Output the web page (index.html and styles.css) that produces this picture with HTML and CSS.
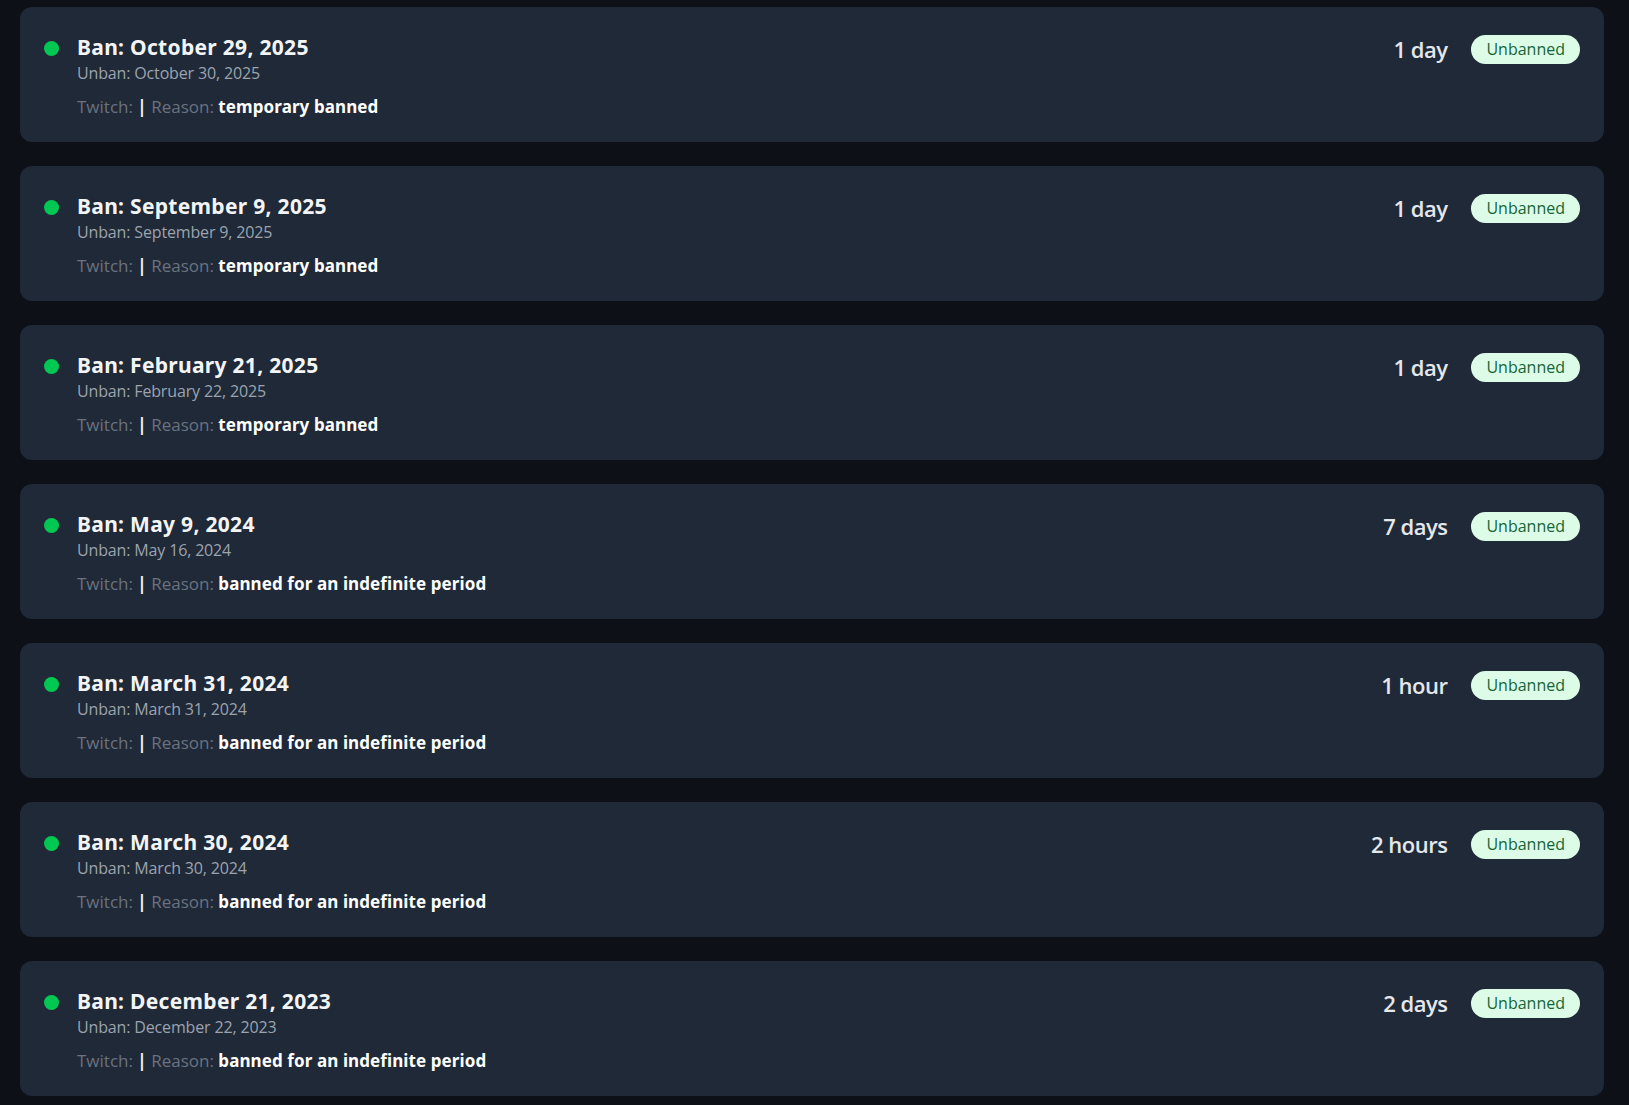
FILE: index.html
```html
<!DOCTYPE html>
<html lang="en">
<head>
<meta charset="utf-8">
<title>Ban history</title>
<link rel="stylesheet" href="styles.css">
</head>
<body>
<main class="list">
  <article class="card">
    <div class="info">
      <span class="dot"></span>
      <div class="text">
        <div class="title">Ban: October 29, 2025</div>
        <div class="unban">Unban: October 30, 2025</div>
        <div class="meta"><span class="label">Twitch:</span> <span class="sep">|</span> <span class="label">Reason:</span> <span class="reason">temporary banned</span></div>
      </div>
    </div>
    <div class="side"><span class="duration">1 day</span><span class="badge">Unbanned</span></div>
  </article>
  <article class="card">
    <div class="info">
      <span class="dot"></span>
      <div class="text">
        <div class="title">Ban: September 9, 2025</div>
        <div class="unban">Unban: September 9, 2025</div>
        <div class="meta"><span class="label">Twitch:</span> <span class="sep">|</span> <span class="label">Reason:</span> <span class="reason">temporary banned</span></div>
      </div>
    </div>
    <div class="side"><span class="duration">1 day</span><span class="badge">Unbanned</span></div>
  </article>
  <article class="card">
    <div class="info">
      <span class="dot"></span>
      <div class="text">
        <div class="title">Ban: February 21, 2025</div>
        <div class="unban">Unban: February 22, 2025</div>
        <div class="meta"><span class="label">Twitch:</span> <span class="sep">|</span> <span class="label">Reason:</span> <span class="reason">temporary banned</span></div>
      </div>
    </div>
    <div class="side"><span class="duration">1 day</span><span class="badge">Unbanned</span></div>
  </article>
  <article class="card">
    <div class="info">
      <span class="dot"></span>
      <div class="text">
        <div class="title">Ban: May 9, 2024</div>
        <div class="unban">Unban: May 16, 2024</div>
        <div class="meta"><span class="label">Twitch:</span> <span class="sep">|</span> <span class="label">Reason:</span> <span class="reason">banned for an indefinite period</span></div>
      </div>
    </div>
    <div class="side"><span class="duration">7 days</span><span class="badge">Unbanned</span></div>
  </article>
  <article class="card">
    <div class="info">
      <span class="dot"></span>
      <div class="text">
        <div class="title">Ban: March 31, 2024</div>
        <div class="unban">Unban: March 31, 2024</div>
        <div class="meta"><span class="label">Twitch:</span> <span class="sep">|</span> <span class="label">Reason:</span> <span class="reason">banned for an indefinite period</span></div>
      </div>
    </div>
    <div class="side"><span class="duration">1 hour</span><span class="badge">Unbanned</span></div>
  </article>
  <article class="card">
    <div class="info">
      <span class="dot"></span>
      <div class="text">
        <div class="title">Ban: March 30, 2024</div>
        <div class="unban">Unban: March 30, 2024</div>
        <div class="meta"><span class="label">Twitch:</span> <span class="sep">|</span> <span class="label">Reason:</span> <span class="reason">banned for an indefinite period</span></div>
      </div>
    </div>
    <div class="side"><span class="duration">2 hours</span><span class="badge">Unbanned</span></div>
  </article>
  <article class="card">
    <div class="info">
      <span class="dot"></span>
      <div class="text">
        <div class="title">Ban: December 21, 2023</div>
        <div class="unban">Unban: December 22, 2023</div>
        <div class="meta"><span class="label">Twitch:</span> <span class="sep">|</span> <span class="label">Reason:</span> <span class="reason">banned for an indefinite period</span></div>
      </div>
    </div>
    <div class="side"><span class="duration">2 days</span><span class="badge">Unbanned</span></div>
  </article>
</main>
</body>
</html>
```
FILE: styles.css
```css
html, body {
  margin: 0;
  padding: 0;
  background: #0d1017;
}
body {
  font-family: "Open Sans", "Noto Sans", sans-serif;
  color: #f3f4f6;
}
.list {
  display: flex;
  flex-direction: column;
  gap: 24px;
  padding: 7px 25px 0 20px;
}
.card {
  display: flex;
  justify-content: space-between;
  align-items: flex-start;
  background: #1f2937;
  border-radius: 12px;
  padding: 25px 24px 0 24px;
  height: 110px;
}
.info {
  display: flex;
  align-items: flex-start;
  gap: 18px;
}
.dot {
  width: 15px;
  height: 15px;
  border-radius: 50%;
  background: #00c853;
  margin-top: 9px;
  flex: none;
}
.text {
  display: flex;
  flex-direction: column;
}
.title {
  font-family: "Noto Sans", sans-serif;
  font-weight: 700;
  font-size: 21px;
  letter-spacing: 0.3px;
  line-height: 30px;
  color: #f3f4f6;
}
.unban {
  font-family: "Open Sans", sans-serif;
  font-size: 16px;
  line-height: 22px;
  color: #9ca3af;
  letter-spacing: -0.15px;
}
.meta {
  margin-top: 11px;
  font-family: "Open Sans", sans-serif;
  font-size: 17px;
  line-height: 24px;
}
.label {
  color: #6b7280;
}
.sep {
  color: #f3f4f6;
  font-weight: 700;
}
.reason {
  font-family: "Noto Sans", sans-serif;
  font-weight: 700;
  letter-spacing: 0.1px;
  color: #ffffff;
}
.side {
  display: flex;
  align-items: center;
  gap: 24px;
  padding-top: 2px;
}
.duration {
  font-family: "Open Sans", sans-serif;
  font-weight: 600;
  font-size: 22px;
  color: #e5e7eb;
  letter-spacing: -0.5px;
}
.badge {
  background: #dcfce7;
  color: #166534;
  font-family: "Open Sans", sans-serif;
  font-size: 16px;
  line-height: 29px;
  padding: 0 15px;
  border-radius: 15px;
}
```
